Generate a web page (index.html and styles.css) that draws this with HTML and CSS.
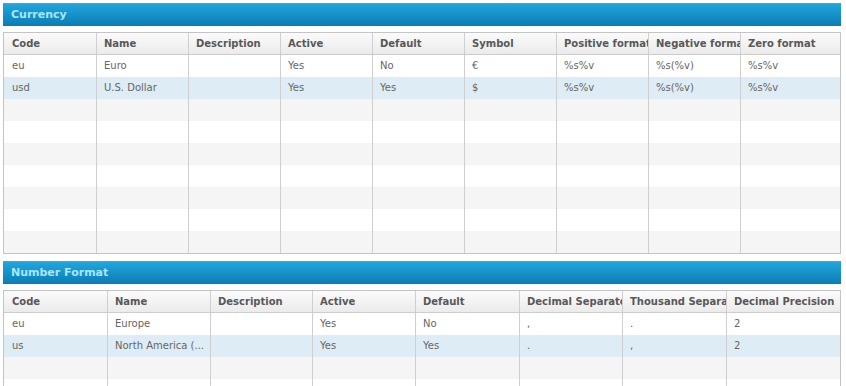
FILE: index.html
```html
<!DOCTYPE html>
<html>
<head>
<meta charset="utf-8">
<link rel="stylesheet" href="styles.css">
</head>
<body>
<section class="panel">
  <div class="bar">Currency</div>
  <div class="grid cur">
    <div class="row head">
      <div class="c">Code</div><div class="c">Name</div><div class="c">Description</div><div class="c">Active</div><div class="c">Default</div><div class="c">Symbol</div><div class="c">Positive format</div><div class="c">Negative format</div><div class="c">Zero format</div>
    </div>
    <div class="row">
      <div class="c">eu</div><div class="c">Euro</div><div class="c"></div><div class="c">Yes</div><div class="c">No</div><div class="c">€</div><div class="c">%s%v</div><div class="c">%s(%v)</div><div class="c">%s%v</div>
    </div>
    <div class="row sel">
      <div class="c">usd</div><div class="c">U.S. Dollar</div><div class="c"></div><div class="c">Yes</div><div class="c">Yes</div><div class="c">$</div><div class="c">%s%v</div><div class="c">%s(%v)</div><div class="c">%s%v</div>
    </div>
    <div class="row alt"><div class="c"></div><div class="c"></div><div class="c"></div><div class="c"></div><div class="c"></div><div class="c"></div><div class="c"></div><div class="c"></div><div class="c"></div></div>
    <div class="row"><div class="c"></div><div class="c"></div><div class="c"></div><div class="c"></div><div class="c"></div><div class="c"></div><div class="c"></div><div class="c"></div><div class="c"></div></div>
    <div class="row alt"><div class="c"></div><div class="c"></div><div class="c"></div><div class="c"></div><div class="c"></div><div class="c"></div><div class="c"></div><div class="c"></div><div class="c"></div></div>
    <div class="row"><div class="c"></div><div class="c"></div><div class="c"></div><div class="c"></div><div class="c"></div><div class="c"></div><div class="c"></div><div class="c"></div><div class="c"></div></div>
    <div class="row alt"><div class="c"></div><div class="c"></div><div class="c"></div><div class="c"></div><div class="c"></div><div class="c"></div><div class="c"></div><div class="c"></div><div class="c"></div></div>
    <div class="row"><div class="c"></div><div class="c"></div><div class="c"></div><div class="c"></div><div class="c"></div><div class="c"></div><div class="c"></div><div class="c"></div><div class="c"></div></div>
    <div class="row alt"><div class="c"></div><div class="c"></div><div class="c"></div><div class="c"></div><div class="c"></div><div class="c"></div><div class="c"></div><div class="c"></div><div class="c"></div></div>
  </div>
</section>
<section class="panel">
  <div class="bar">Number Format</div>
  <div class="grid num">
    <div class="row head">
      <div class="c">Code</div><div class="c">Name</div><div class="c">Description</div><div class="c">Active</div><div class="c">Default</div><div class="c">Decimal Separator</div><div class="c">Thousand Separator</div><div class="c">Decimal Precision</div>
    </div>
    <div class="row">
      <div class="c">eu</div><div class="c">Europe</div><div class="c"></div><div class="c">Yes</div><div class="c">No</div><div class="c">,</div><div class="c">.</div><div class="c">2</div>
    </div>
    <div class="row sel">
      <div class="c">us</div><div class="c">North America (...</div><div class="c"></div><div class="c">Yes</div><div class="c">Yes</div><div class="c">.</div><div class="c">,</div><div class="c">2</div>
    </div>
    <div class="row alt"><div class="c"></div><div class="c"></div><div class="c"></div><div class="c"></div><div class="c"></div><div class="c"></div><div class="c"></div><div class="c"></div></div>
    <div class="row"><div class="c"></div><div class="c"></div><div class="c"></div><div class="c"></div><div class="c"></div><div class="c"></div><div class="c"></div><div class="c"></div></div>
  </div>
</section>
</body>
</html>
```

FILE: styles.css
```css
html, body {
  margin: 0;
  padding: 0;
  background: #fff;
  overflow: hidden;
}
body {
  padding: 3px 0 0 3px;
  font-family: "DejaVu Sans", Verdana, sans-serif;
}
.panel {
  width: 838px;
  margin-bottom: 7px;
}
.bar {
  height: 23px;
  box-sizing: border-box;
  padding: 0 0 0 8px;
  line-height: 22px;
  font-size: 11px;
  font-weight: bold;
  color: #a9e6fd;
  background: linear-gradient(#20a6dc, #0b7cb5);
  border-top: 1px solid #2bb0e2;
}
.grid {
  margin-top: 6px;
  border: 1px solid #c4c4c4;
}
.row {
  display: grid;
  height: 22px;
  background: #fff;
}
.cur .row { grid-template-columns: 93px repeat(7, 92px) 1fr; }
.num .row { grid-template-columns: 104px 103px 102px 103px 104px 103px 104px 1fr; }
.row.alt { background: #f5f5f5; }
.row.sel { background: #deecf5; }
.c {
  box-sizing: border-box;
  border-right: 1px solid #cfcfcf;
  padding: 0 0 0 7px;
  line-height: 22px;
  font-size: 10px;
  color: #666;
  white-space: nowrap;
  overflow: hidden;
}
.c:last-child { border-right: none; }
.cur .c:first-child, .num .c:first-child { padding-left: 8px; }
.row.head {
  height: 22px;
  box-sizing: border-box;
  border-bottom: 1px solid #cdcdcd;
  background: linear-gradient(#fbfbfb, #ebebeb);
}
.row.head .c {
  line-height: 21px;
  font-weight: bold;
  color: #585858;
}
```
